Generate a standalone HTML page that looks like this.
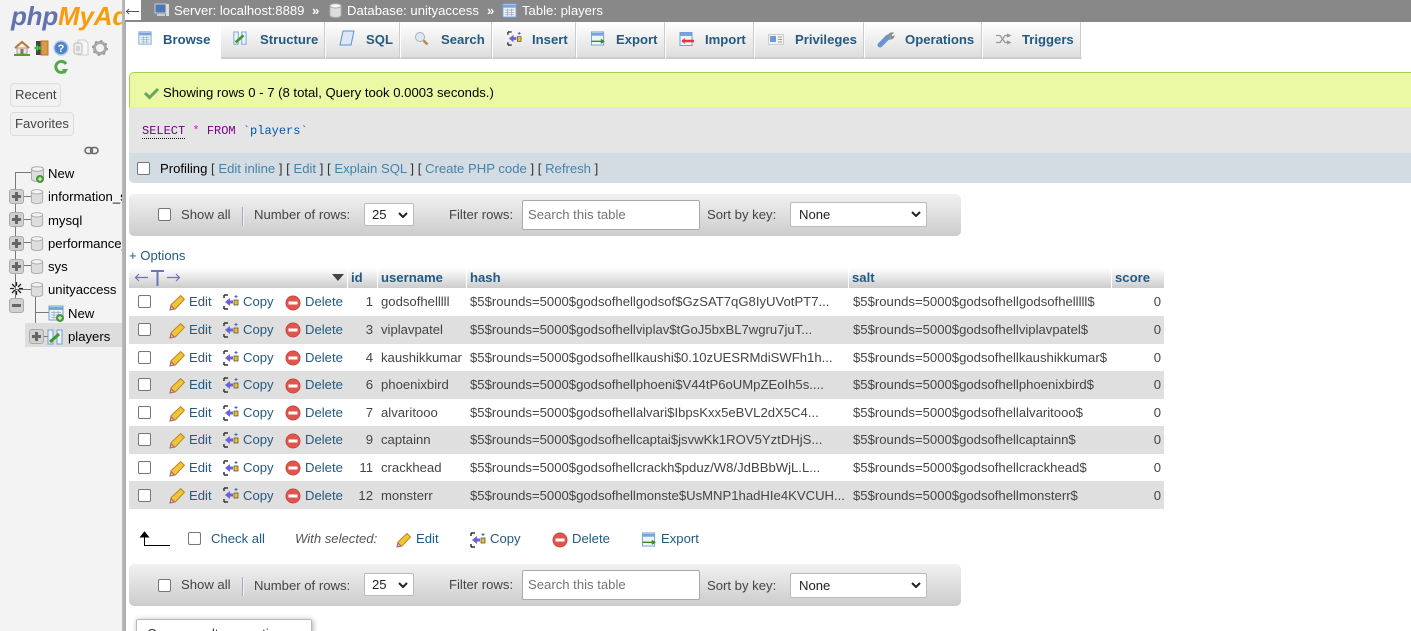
<!DOCTYPE html>
<html><head><meta charset="utf-8"><title>phpMyAdmin</title>
<style>
html,body{margin:0;padding:0;background:#fff}
html{width:1411px;height:631px;overflow:hidden}
body{width:1411px;height:631px;overflow:hidden;position:relative;font-family:"Liberation Sans",Arial,sans-serif;font-size:13.12px;line-height:18px;color:#444}
.a{position:absolute;white-space:nowrap}
a,.l{color:#235a81;text-decoration:none}
svg.i{position:absolute;overflow:visible}
#side{position:absolute;left:0;top:0;width:122px;height:631px;background:#f3f3f3;overflow:hidden}
#edge{position:absolute;left:122px;top:0;width:4px;height:631px;background:linear-gradient(90deg,#bbb,#aaa)}
#top{position:absolute;left:125px;top:0;width:1286px;height:22px;background:#888;color:#fff}
.tab{position:absolute;top:22px;height:35px;background:linear-gradient(#fff,#dedede);border-right:1px solid #fff;border-bottom:2px solid #ccc;box-shadow:inset -1px 0 0 #ccc}
.tt{position:absolute;top:31px;font-weight:bold;color:#235a81;white-space:nowrap}
.cb{position:absolute;width:11px;height:11px;border:1px solid #767676;border-radius:2px;background:#fff}
.nav{position:absolute;left:129px;width:832px;height:42px;background:linear-gradient(#f1f1f1,#ccc);border-radius:5px}
.sel{position:absolute;background:#fff;border:1px solid #bbb;border-radius:2px;height:23px;box-sizing:border-box;color:#222}
.sel svg{position:absolute;right:5px;top:8px}
.inp{position:absolute;background:#fff;border:1px solid #aaa;border-radius:2px;box-sizing:border-box;width:178px;height:30px;color:#757575;padding:5px 0 0 5px;white-space:nowrap}
.th{position:absolute;top:268px;height:20px;background:linear-gradient(#fff,#ccc);font-weight:bold;color:#235a81;box-sizing:border-box;padding:1px 0 0 3px}
.row{position:absolute;left:129px;width:1035px;height:28px}
.row.s{background:#dfdfdf}
.c{position:absolute;white-space:nowrap;top:6px}
.u .c{top:5px}
.u .cb{margin-top:-1px}
.tree{position:absolute;background:#777}
.pm{position:absolute;width:13px;height:13px;background:#d0d0d0;border:1px solid #aaa;border-radius:3px}
.pm:before{content:"";position:absolute;left:2px;top:5px;width:9px;height:3px;background:#666}
.pm.p:after{content:"";position:absolute;left:5px;top:2px;width:3px;height:9px;background:#666}
.btn{position:absolute;left:10px;height:24px;border:1px solid #ddd;border-radius:4px;background:#f1f1f1;box-sizing:border-box;padding:2px 4px;color:#444}
</style></head><body>
<svg width="0" height="0" style="position:absolute"><defs>
<symbol id="db" viewBox="0 0 14 16"><path d="M1 3v10c0 1.500 2.500 2.500 6 2.500s6-1 6-2.500V3z" fill="#ddd" stroke="#aaa"/><ellipse cx="7" cy="3" rx="6" ry="2.300" fill="#f4f4f4" stroke="#aaa"/></symbol>
<symbol id="pen" viewBox="0 0 16 16"><path d="M1 15l1-5L11 1.500l3.500 3.500L6 14z" fill="#f3c33c" stroke="#b98a1a"/><path d="M1 15l1-4 3 3z" fill="#f0c9a0" stroke="#a67"/></symbol>
<symbol id="copy" viewBox="0 0 16 16"><path d="M1 1h4M1 1v3M1 15h4M1 15v-3" stroke="#333" stroke-width="1.500" fill="none"/><path d="M2 8l5-4v2.500h3v3H7V12z" fill="#6a62d8"/><rect x="11" y="6" width="4" height="5" fill="#f0c020" stroke="#444" stroke-width=".7"/><path d="M13 1v3M11.500 2.500h3" stroke="#46b"/></symbol>
<symbol id="del" viewBox="0 0 16 16"><circle cx="8" cy="8" r="7" fill="#e0564c" stroke="#c44"/><rect x="3.500" y="6.500" width="9" height="3" fill="#fff"/></symbol>
<symbol id="tbl" viewBox="0 0 16 16"><rect x="1" y="1" width="14" height="14" fill="#eef4fb" stroke="#6f9fd8"/><path d="M1.500 2h13v3h-13z" fill="#7aa3d8"/><path d="M3 7.500h10M3 10h10M3 12.500h10M6 6v8M10 6v8" stroke="#9ab" stroke-width=".8"/></symbol>
<symbol id="str" viewBox="0 0 16 16"><path d="M1 1h5v14H1zM10 1h5v14h-5z" fill="#eaf2fb" stroke="#6f9fd8"/><path d="M3 13l9-8" stroke="#3a9a2a" stroke-width="3"/></symbol>
<symbol id="exp" viewBox="0 0 16 16"><rect x="1" y="1" width="13" height="14" fill="#eef4fb" stroke="#6f9fd8"/><path d="M1.500 2h12v3h-12z" fill="#7aa3d8"/><path d="M1 11h12M11 9l3 2-3 2" stroke="#3a8a2a" stroke-width="1.500" fill="none"/></symbol>
</defs></svg>

<div id="side">
<div class="a" style="left:11px;top:-2px;font-size:26px;font-weight:bold;font-style:italic;letter-spacing:-.2px;line-height:36px"><span style="color:#6272ac">php</span><span style="color:#f89c0e">MyAdmin</span></div>
<svg class="i" style="left:14px;top:40px" width="16" height="16" viewBox="0 0 16 16"><path d="M1 8l7-6 7 6" fill="none" stroke="#b5762e" stroke-width="2"/><path d="M3 8h10v6H3z" fill="#f2e6cf" stroke="#a98"/><rect x="6.500" y="9" width="3" height="5" fill="#777"/><path d="M0 15h16" stroke="#5a9a32" stroke-width="2"/></svg>
<svg class="i" style="left:33px;top:40px" width="16" height="16" viewBox="0 0 16 16"><rect x="3" y="1" width="12" height="14" fill="#444"/><rect x="8" y="1" width="7" height="14" fill="#d99a4a" stroke="#b57522"/><path d="M1 8l4-3.500V6.500h4v3H5v2z" fill="#49b33f"/></svg>
<svg class="i" style="left:53px;top:40px" width="16" height="16" viewBox="0 0 16 16"><circle cx="8" cy="8" r="7" fill="#4b84c9" stroke="#b5cbe6" stroke-width="1.500"/><text x="8" y="12" font-size="11" font-weight="bold" text-anchor="middle" fill="#fff" font-family="Liberation Sans">?</text></svg>
<svg class="i" style="left:73px;top:39px" width="16" height="17" viewBox="0 0 16 17"><path d="M5 1h7l3 3v12H5z" fill="#f6f6f6" stroke="#ccc"/><rect x="1" y="4" width="8" height="11" rx="2" fill="#eee" stroke="#bbb"/><path d="M4 7v5M6 7v5" stroke="#bbb"/></svg>
<svg class="i" style="left:92px;top:40px" width="16" height="16" viewBox="0 0 16 16"><circle cx="8" cy="8" r="5.500" fill="none" stroke="#aaa" stroke-width="3"/><circle cx="8" cy="8" r="7" fill="none" stroke="#999" stroke-width="2" stroke-dasharray="2.200 3.300"/></svg>
<svg class="i" style="left:54px;top:60px" width="14" height="15" viewBox="0 0 14 15"><path d="M12 4A5.500 5.500 0 1 0 11 11" fill="none" stroke="#55a84a" stroke-width="3"/><path d="M8 9h6l-3 5z" fill="#55a84a"/></svg>
<div class="btn" style="top:83px;width:51px">Recent</div>
<div class="btn" style="top:112px;width:64px">Favorites</div>
<svg class="i" style="left:84px;top:146px" width="15" height="9" viewBox="0 0 15 9"><rect x="1" y="1.500" width="7.500" height="6" rx="3" fill="none" stroke="#666" stroke-width="1.500"/><rect x="6.500" y="1.500" width="7.500" height="6" rx="3" fill="none" stroke="#666" stroke-width="1.500"/></svg>

<div class="tree" style="left:15px;top:172px;width:1px;height:130px"></div>
<div class="tree" style="left:15px;top:172px;width:16px;height:1px"></div>
<div class="tree" style="left:15px;top:196px;width:16px;height:1px"></div>
<div class="tree" style="left:15px;top:219px;width:16px;height:1px"></div>
<div class="tree" style="left:15px;top:242px;width:16px;height:1px"></div>
<div class="tree" style="left:15px;top:265px;width:16px;height:1px"></div>
<div class="tree" style="left:15px;top:289px;width:16px;height:1px"></div>
<div class="tree" style="left:35px;top:296px;width:1px;height:40px"></div>
<div class="tree" style="left:35px;top:312px;width:14px;height:1px"></div>
<svg class="i" style="left:30px;top:166px" width="15" height="16"><use href="#db"/></svg>
<svg class="i" style="left:36px;top:175px" width="8" height="8" viewBox="0 0 8 8"><circle cx="4" cy="4" r="4" fill="#4a9a3a"/><path d="M2 4h4M4 2v4" stroke="#fff"/></svg>
<div class="a" style="left:48px;top:165px;color:#000">New</div>
<div class="pm p" style="left:9px;top:189px"></div><svg class="i" style="left:30px;top:189px" width="14" height="15"><use href="#db"/></svg><div class="a" style="left:48px;top:188px;color:#000">information_schema</div>
<div class="pm p" style="left:9px;top:212px"></div><svg class="i" style="left:30px;top:212px" width="14" height="15"><use href="#db"/></svg><div class="a" style="left:48px;top:212px;color:#000">mysql</div>
<div class="pm p" style="left:9px;top:236px"></div><svg class="i" style="left:30px;top:236px" width="14" height="15"><use href="#db"/></svg><div class="a" style="left:48px;top:235px;color:#000">performance_schema</div>
<div class="pm p" style="left:9px;top:259px"></div><svg class="i" style="left:30px;top:259px" width="14" height="15"><use href="#db"/></svg><div class="a" style="left:48px;top:258px;color:#000">sys</div>
<svg class="i" style="left:9px;top:281px" width="15" height="15" viewBox="0 0 15 15"><path d="M7.500 1v4M7.500 10v4M1 7.500h4M10 7.500h4M3 3l3 3M9 9l3 3M12 3L9 6M6 9l-3 3" stroke="#222" stroke-width="1.300"/></svg>
<svg class="i" style="left:30px;top:282px" width="14" height="15"><use href="#db"/></svg><div class="a" style="left:48px;top:281px;color:#000">unityaccess</div>
<div class="pm" style="left:9px;top:298px"></div>
<svg class="i" style="left:48px;top:305px" width="16" height="16"><use href="#tbl"/></svg>
<svg class="i" style="left:56px;top:314px" width="8" height="8" viewBox="0 0 8 8"><circle cx="4" cy="4" r="4" fill="#4a9a3a"/><path d="M2 4h4M4 2v4" stroke="#fff"/></svg>
<div class="a" style="left:68px;top:305px;color:#000">New</div>
<div class="a" style="left:25px;top:323px;width:97px;height:24px;background:#ddd"></div>
<div class="tree" style="left:35px;top:336px;width:14px;height:1px"></div>
<div class="pm p" style="left:29px;top:329px"></div>
<svg class="i" style="left:47px;top:329px" width="16" height="16"><use href="#str"/></svg>
<div class="a" style="left:68px;top:328px;color:#000">players</div>
</div>
<div id="edge"></div>

<div id="top"></div>
<div class="a" style="left:125px;top:0;width:16px;height:20px;background:#fff"></div>
<svg class="i" style="left:126px;top:8px" width="13" height="7" viewBox="0 0 13 7"><path d="M0 3.500h13M3 1L.5 3.500 3 6" stroke="#555" fill="none"/></svg>
<svg class="i" style="left:154px;top:3px" width="16" height="15" viewBox="0 0 16 15"><rect x="1" y="1" width="11" height="9" fill="#4a78b8" stroke="#ccc"/><rect x="3" y="11" width="8" height="2" fill="#ccc"/><rect x="12" y="1" width="3" height="12" fill="#ddd"/></svg>
<div class="a" style="left:174px;top:2px;color:#fff">Server: localhost:8889</div>
<div class="a" style="left:312px;top:2px;color:#fff;font-weight:bold">»</div>
<svg class="i" style="left:329px;top:3px" width="13" height="15"><use href="#db"/></svg>
<div class="a" style="left:347px;top:2px;color:#fff">Database: unityaccess</div>
<div class="a" style="left:487px;top:2px;color:#fff;font-weight:bold">»</div>
<svg class="i" style="left:502px;top:3px" width="15" height="15"><use href="#tbl"/></svg>
<div class="a" style="left:522px;top:2px;color:#fff">Table: players</div>

<div class="tab" style="left:221px;width:104px"></div>
<div class="tab" style="left:326px;width:74px"></div>
<div class="tab" style="left:401px;width:91px"></div>
<div class="tab" style="left:493px;width:83px"></div>
<div class="tab" style="left:577px;width:88px"></div>
<div class="tab" style="left:666px;width:88px"></div>
<div class="tab" style="left:755px;width:109px"></div>
<div class="tab" style="left:865px;width:117px"></div>
<div class="tab" style="left:983px;width:98px"></div>
<svg class="i" style="left:138px;top:31px" width="14" height="14"><use href="#tbl"/></svg><div class="tt" style="left:163px">Browse</div>
<svg class="i" style="left:232px;top:31px" width="16" height="14"><use href="#str"/></svg><div class="tt" style="left:260px">Structure</div>
<svg class="i" style="left:339px;top:30px" width="16" height="17" viewBox="0 0 16 17"><path d="M4 1h11l-3 14H1z" fill="#dce8f7" stroke="#5f8fcf"/></svg><div class="tt" style="left:366px">SQL</div>
<svg class="i" style="left:414px;top:31px" width="15" height="15" viewBox="0 0 15 15"><circle cx="6" cy="6" r="4.500" fill="#dfe9f5" stroke="#aab"/><path d="M9.500 9.500l4 4" stroke="#b98a3a" stroke-width="2.500"/></svg><div class="tt" style="left:441px">Search</div>
<svg class="i" style="left:507px;top:31px" width="15" height="15"><use href="#copy"/></svg><div class="tt" style="left:532px">Insert</div>
<svg class="i" style="left:590px;top:31px" width="16" height="15"><use href="#exp"/></svg><div class="tt" style="left:616px">Export</div>
<svg class="i" style="left:679px;top:32px" width="16" height="14" viewBox="0 0 16 14"><rect x="1" y="0.500" width="12" height="13" fill="#eef4fb" stroke="#6f9fd8"/><path d="M1.500 1h11v3h-11z" fill="#7aa3d8"/><path d="M4 9h11" stroke="#e33" stroke-width="2.500"/><path d="M6 6.500L3 9l3 2.500" stroke="#e33" fill="none"/></svg><div class="tt" style="left:705px">Import</div>
<svg class="i" style="left:768px;top:34px" width="16" height="11" viewBox="0 0 16 11"><rect x=".5" y=".5" width="15" height="10" fill="#f3f3f3" stroke="#ccc"/><rect x="2" y="2" width="6" height="6" fill="#6a9ad8"/><path d="M10 3h4M10 5.500h4M10 8h4" stroke="#999"/></svg><div class="tt" style="left:795px">Privileges</div>
<svg class="i" style="left:878px;top:31px" width="17" height="16" viewBox="0 0 17 16"><path d="M2 14L10 6" stroke="#6a93d6" stroke-width="5" stroke-linecap="round"/><path d="M10 6a4 4 0 0 1 5-4l-2 2 1 2 2-1a4 4 0 0 1-5 3z" fill="#999" stroke="#888"/></svg><div class="tt" style="left:905px">Operations</div>
<svg class="i" style="left:996px;top:33px" width="15" height="12" viewBox="0 0 15 12"><path d="M0 2.500h4l5 7h4M0 9.500h4l5-7h4M11 1l3 1.500L11 4M11 8l3 1.500L11 11" stroke="#999" stroke-width="1.300" fill="none"/></svg><div class="tt" style="left:1022px">Triggers</div>

<div class="a" style="left:129px;top:72px;width:1282px;height:35px;box-sizing:border-box;background:#ebf8a4;border-top:1px solid #a2d246;border-left:1px solid #a2d246;border-top-left-radius:5px"></div>
<svg class="i" style="left:144px;top:87px" width="15" height="12" viewBox="0 0 15 12"><path d="M1 6l4.500 4.500L14 2" stroke="#62a85a" stroke-width="3" fill="none"/></svg>
<div class="a" style="left:163px;top:84px;color:#000">Showing rows 0 - 7 (8 total, Query took 0.0003 seconds.)</div>

<div class="a" style="left:129px;top:107px;width:1282px;height:46px;background:#e5e5e5"></div>
<div class="a" style="left:142px;top:124px;font:12px/14px 'Liberation Mono',monospace"><span style="color:#708;border-bottom:1px dotted #000">SELECT</span> <span style="color:#f0f">*</span> <span style="color:#708">FROM</span> <span style="color:#05a">`players`</span></div>

<div class="a" style="left:129px;top:153px;width:1282px;height:30px;background:#d3dce3;border-bottom-left-radius:5px"></div>
<div class="cb" style="left:137px;top:162px"></div>
<div class="a" style="left:160px;top:160px;color:#000">Profiling <span style="color:#333">[</span> <span style="color:#4682a8">Edit inline</span> <span style="color:#333">]</span> <span style="color:#333">[</span> <span style="color:#4682a8">Edit</span> <span style="color:#333">]</span> <span style="color:#333">[</span> <span style="color:#4682a8">Explain SQL</span> <span style="color:#333">]</span> <span style="color:#333">[</span> <span style="color:#4682a8">Create PHP code</span> <span style="color:#333">]</span> <span style="color:#333">[</span> <span style="color:#4682a8">Refresh</span> <span style="color:#333">]</span></div>

<div class="nav" style="top:194px"></div>
<div class="cb" style="left:158px;top:208px"></div>
<div class="a" style="left:181px;top:206px">Show all</div>
<div class="a" style="left:242px;top:207px;width:1px;height:19px;background:#aaa;border-right:1px solid #eef"></div>
<div class="a" style="left:254px;top:206px">Number of rows:</div>
<div class="sel" style="left:364px;top:203px;width:50px;padding:2px 0 0 7px">25<svg width="10" height="6" viewBox="0 0 10 6"><path d="M1 1l4 4 4-4" stroke="#222" stroke-width="2" fill="none"/></svg></div>
<div class="a" style="left:449px;top:206px">Filter rows:</div>
<div class="inp" style="left:522px;top:200px">Search this table</div>
<div class="a" style="left:707px;top:206px">Sort by key:</div>
<div class="sel" style="left:790px;top:202px;width:137px;height:25px;padding:3px 0 0 8px">None<svg width="10" height="6" viewBox="0 0 10 6"><path d="M1 1l4 4 4-4" stroke="#222" stroke-width="2" fill="none"/></svg></div>

<div class="a l" style="left:129px;top:247px">+ Options</div>

<div class="th" style="left:129px;width:218px"></div>
<svg class="i" style="left:135px;top:269px" width="47" height="18" viewBox="0 0 47 18"><path d="M0 8.500h13M4 5L.5 8.500 4 12M32 8.500h13M41 5l3.500 3.500L41 12" stroke="#6a76b8" stroke-width="1.200" fill="none"/><path d="M16 2h13M22.500 2v15" stroke="#6a76b8" stroke-width="2" fill="none"/></svg>
<svg class="i" style="left:332px;top:274px" width="12" height="7" viewBox="0 0 12 7"><path d="M0 0h12L6 7z" fill="#444"/></svg>
<div class="th" style="left:348px;width:29px">id</div>
<div class="th" style="left:378px;width:88px">username</div>
<div class="th" style="left:467px;width:381px">hash</div>
<div class="th" style="left:849px;width:262px">salt</div>
<div class="th" style="left:1112px;width:52px">score</div>

<div class="row u" style="top:288px"><div class="cb" style="left:9px;top:8px"></div><svg class="i" style="left:40px;top:6px" width="17" height="17"><use href="#pen"/></svg><div class="c l" style="left:60px">Edit</div><svg class="i" style="left:94px;top:6px" width="16" height="16"><use href="#copy"/></svg><div class="c l" style="left:114px">Copy</div><svg class="i" style="left:156px;top:7px" width="16" height="16"><use href="#del"/></svg><div class="c l" style="left:176px">Delete</div><div class="c" style="right:791px">1</div><div class="c" style="left:252px">godsofhelllll</div><div class="c" style="left:341px">$5$rounds=5000$godsofhellgodsof$GzSAT7qG8IyUVotPT7...</div><div class="c" style="left:724px">$5$rounds=5000$godsofhellgodsofhelllll$</div><div class="c" style="right:3px">0</div></div>
<div class="row s" style="top:316px"><div class="cb" style="left:9px;top:7px"></div><svg class="i" style="left:40px;top:6px" width="17" height="17"><use href="#pen"/></svg><div class="c l" style="left:60px;top:5px">Edit</div><svg class="i" style="left:94px;top:6px" width="16" height="16"><use href="#copy"/></svg><div class="c l" style="left:114px;top:5px">Copy</div><svg class="i" style="left:156px;top:6px" width="16" height="16"><use href="#del"/></svg><div class="c l" style="left:176px;top:5px">Delete</div><div class="c" style="right:791px;top:5px">3</div><div class="c" style="left:252px;top:5px">viplavpatel</div><div class="c" style="left:341px;top:5px">$5$rounds=5000$godsofhellviplav$tGoJ5bxBL7wgru7juT...</div><div class="c" style="left:724px;top:5px">$5$rounds=5000$godsofhellviplavpatel$</div><div class="c" style="right:3px;top:5px">0</div></div>
<div class="row" style="top:344px"><div class="cb" style="left:9px;top:7px"></div><svg class="i" style="left:40px;top:6px" width="17" height="17"><use href="#pen"/></svg><div class="c l" style="left:60px;top:5px">Edit</div><svg class="i" style="left:94px;top:6px" width="16" height="16"><use href="#copy"/></svg><div class="c l" style="left:114px;top:5px">Copy</div><svg class="i" style="left:156px;top:6px" width="16" height="16"><use href="#del"/></svg><div class="c l" style="left:176px;top:5px">Delete</div><div class="c" style="right:791px;top:5px">4</div><div class="c" style="left:252px;top:5px">kaushikkumar</div><div class="c" style="left:341px;top:5px">$5$rounds=5000$godsofhellkaushi$0.10zUESRMdiSWFh1h...</div><div class="c" style="left:724px;top:5px">$5$rounds=5000$godsofhellkaushikkumar$</div><div class="c" style="right:3px;top:5px">0</div></div>
<div class="row s u" style="top:371px"><div class="cb" style="left:9px;top:8px"></div><svg class="i" style="left:40px;top:6px" width="17" height="17"><use href="#pen"/></svg><div class="c l" style="left:60px">Edit</div><svg class="i" style="left:94px;top:6px" width="16" height="16"><use href="#copy"/></svg><div class="c l" style="left:114px">Copy</div><svg class="i" style="left:156px;top:7px" width="16" height="16"><use href="#del"/></svg><div class="c l" style="left:176px">Delete</div><div class="c" style="right:791px">6</div><div class="c" style="left:252px">phoenixbird</div><div class="c" style="left:341px">$5$rounds=5000$godsofhellphoeni$V44tP6oUMpZEoIh5s....</div><div class="c" style="left:724px">$5$rounds=5000$godsofhellphoenixbird$</div><div class="c" style="right:3px">0</div></div>
<div class="row" style="top:399px"><div class="cb" style="left:9px;top:7px"></div><svg class="i" style="left:40px;top:6px" width="17" height="17"><use href="#pen"/></svg><div class="c l" style="left:60px;top:5px">Edit</div><svg class="i" style="left:94px;top:6px" width="16" height="16"><use href="#copy"/></svg><div class="c l" style="left:114px;top:5px">Copy</div><svg class="i" style="left:156px;top:6px" width="16" height="16"><use href="#del"/></svg><div class="c l" style="left:176px;top:5px">Delete</div><div class="c" style="right:791px;top:5px">7</div><div class="c" style="left:252px;top:5px">alvaritooo</div><div class="c" style="left:341px;top:5px">$5$rounds=5000$godsofhellalvari$IbpsKxx5eBVL2dX5C4...</div><div class="c" style="left:724px;top:5px">$5$rounds=5000$godsofhellalvaritooo$</div><div class="c" style="right:3px;top:5px">0</div></div>
<div class="row s u" style="top:426px"><div class="cb" style="left:9px;top:8px"></div><svg class="i" style="left:40px;top:6px" width="17" height="17"><use href="#pen"/></svg><div class="c l" style="left:60px">Edit</div><svg class="i" style="left:94px;top:6px" width="16" height="16"><use href="#copy"/></svg><div class="c l" style="left:114px">Copy</div><svg class="i" style="left:156px;top:7px" width="16" height="16"><use href="#del"/></svg><div class="c l" style="left:176px">Delete</div><div class="c" style="right:791px">9</div><div class="c" style="left:252px">captainn</div><div class="c" style="left:341px">$5$rounds=5000$godsofhellcaptai$jsvwKk1ROV5YztDHjS...</div><div class="c" style="left:724px">$5$rounds=5000$godsofhellcaptainn$</div><div class="c" style="right:3px">0</div></div>
<div class="row" style="top:454px"><div class="cb" style="left:9px;top:7px"></div><svg class="i" style="left:40px;top:6px" width="17" height="17"><use href="#pen"/></svg><div class="c l" style="left:60px;top:5px">Edit</div><svg class="i" style="left:94px;top:6px" width="16" height="16"><use href="#copy"/></svg><div class="c l" style="left:114px;top:5px">Copy</div><svg class="i" style="left:156px;top:6px" width="16" height="16"><use href="#del"/></svg><div class="c l" style="left:176px;top:5px">Delete</div><div class="c" style="right:791px;top:5px">11</div><div class="c" style="left:252px;top:5px">crackhead</div><div class="c" style="left:341px;top:5px">$5$rounds=5000$godsofhellcrackh$pduz/W8/JdBBbWjL.L...</div><div class="c" style="left:724px;top:5px">$5$rounds=5000$godsofhellcrackhead$</div><div class="c" style="right:3px;top:5px">0</div></div>
<div class="row s" style="top:481px"><div class="cb" style="left:9px;top:8px"></div><svg class="i" style="left:40px;top:6px" width="17" height="17"><use href="#pen"/></svg><div class="c l" style="left:60px">Edit</div><svg class="i" style="left:94px;top:6px" width="16" height="16"><use href="#copy"/></svg><div class="c l" style="left:114px">Copy</div><svg class="i" style="left:156px;top:7px" width="16" height="16"><use href="#del"/></svg><div class="c l" style="left:176px">Delete</div><div class="c" style="right:791px">12</div><div class="c" style="left:252px">monsterr</div><div class="c" style="left:341px">$5$rounds=5000$godsofhellmonste$UsMNP1hadHIe4KVCUH...</div><div class="c" style="left:724px">$5$rounds=5000$godsofhellmonsterr$</div><div class="c" style="right:3px">0</div></div>

<svg class="i" style="left:140px;top:531px" width="30" height="16" viewBox="0 0 30 16"><path d="M4.500 15V3M.5 6l4-5 4 5z" stroke="#000" fill="#000"/><path d="M4 14.500h26" stroke="#000"/></svg>
<div class="cb" style="left:188px;top:532px"></div>
<div class="a l" style="left:211px;top:530px">Check all</div>
<div class="a" style="left:295px;top:530px;font-style:italic;color:#555">With selected:</div>
<svg class="i" style="left:396px;top:532px" width="16" height="16"><use href="#pen"/></svg><div class="a l" style="left:416px;top:530px">Edit</div>
<svg class="i" style="left:470px;top:532px" width="16" height="16"><use href="#copy"/></svg><div class="a l" style="left:490px;top:530px">Copy</div>
<svg class="i" style="left:552px;top:532px" width="16" height="16"><use href="#del"/></svg><div class="a l" style="left:572px;top:530px">Delete</div>
<svg class="i" style="left:641px;top:532px" width="16" height="15"><use href="#exp"/></svg><div class="a l" style="left:661px;top:530px">Export</div>

<div class="nav" style="top:564px"></div>
<div class="cb" style="left:158px;top:579px"></div>
<div class="a" style="left:181px;top:576px">Show all</div>
<div class="a" style="left:242px;top:577px;width:1px;height:19px;background:#aaa;border-right:1px solid #eef"></div>
<div class="a" style="left:254px;top:577px">Number of rows:</div>
<div class="sel" style="left:364px;top:573px;width:50px;padding:2px 0 0 7px">25<svg width="10" height="6" viewBox="0 0 10 6"><path d="M1 1l4 4 4-4" stroke="#222" stroke-width="2" fill="none"/></svg></div>
<div class="a" style="left:449px;top:576px">Filter rows:</div>
<div class="inp" style="left:522px;top:570px">Search this table</div>
<div class="a" style="left:707px;top:577px">Sort by key:</div>
<div class="sel" style="left:790px;top:573px;width:137px;height:25px;padding:3px 0 0 8px">None<svg width="10" height="6" viewBox="0 0 10 6"><path d="M1 1l4 4 4-4" stroke="#222" stroke-width="2" fill="none"/></svg></div>

<div class="a" style="left:136px;top:619px;width:176px;height:30px;box-sizing:border-box;background:#fff;border:1px solid #bbb;box-shadow:1px 1px 6px #aaa;border-radius:2px"></div>
<div class="a" style="left:147px;top:625px;color:#333">Query results operations</div>
</body></html>
